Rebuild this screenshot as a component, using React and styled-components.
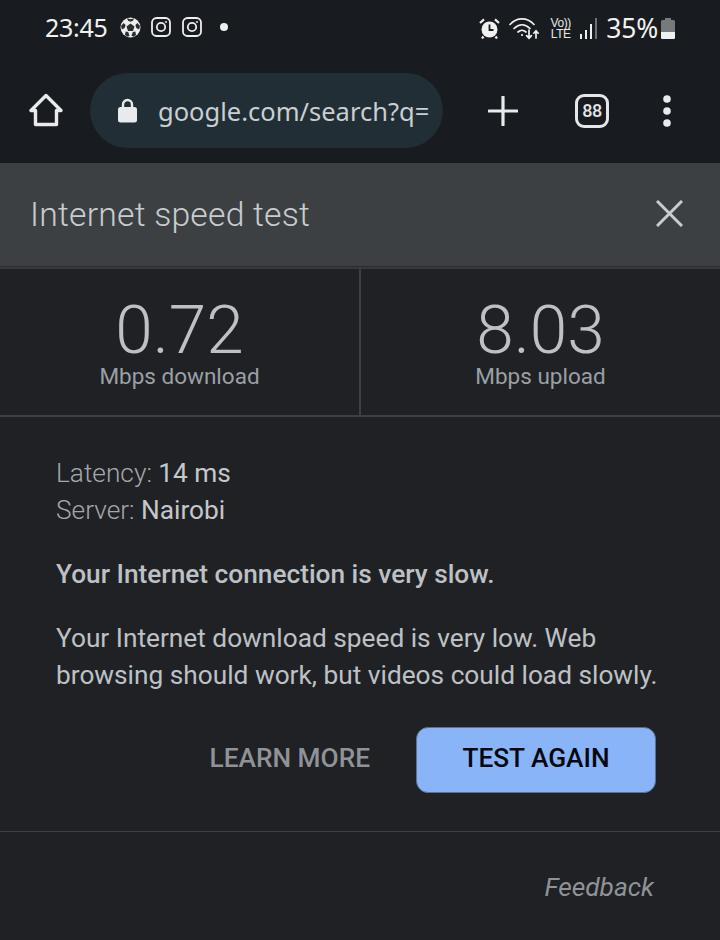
import React from "react";
import styled, { createGlobalStyle } from "styled-components";

const Global = createGlobalStyle`
  html, body {
    margin: 0;
    padding: 0;
    background: #202124;
  }
  * { box-sizing: border-box; }
`;

const Page = styled.div`
  width: 720px;
  height: 940px;
  overflow: hidden;
  background: #202124;
  font-family: Roboto, sans-serif;
  display: flex;
  flex-direction: column;
`;

const StatusBar = styled.div`
  height: 58px;
  background: #181b1f;
  color: #f1f1f1;
  padding: 0 45px 3px 45px;
  display: flex;
  align-items: center;
  justify-content: space-between;
  font-family: "Noto Sans", sans-serif;
`;

const StatusGroup = styled.div`
  display: flex;
  align-items: center;
  gap: ${(p) => p.$gap || 0}px;
  padding-top: ${(p) => p.$top || 0}px;
`;

const StatusSlot = styled.div`
  display: flex;
  align-items: center;
  margin-left: ${(p) => p.$left || 0}px;
`;

const Clock = styled.span`
  font-size: 25px;
  letter-spacing: -0.3px;
  margin-right: 2px;
`;

const Percent = styled.span`
  font-size: 26.5px;
  letter-spacing: -0.2px;
  margin-left: 8px;
`;

const Volte = styled.span`
  font-family: "Liberation Sans", sans-serif;
  font-size: 12px;
  line-height: 11px;
  letter-spacing: -0.4px;
  text-align: center;
  color: #e8e8e8;
  width: 21px;
  margin: 1px 0 0 10px;
  white-space: nowrap;
`;

const Toolbar = styled.div`
  height: 105px;
  background: #181b1f;
  padding: 0 0 0 29px;
  display: flex;
  align-items: center;
`;

const UrlPill = styled.div`
  width: 353px;
  height: 75px;
  margin-left: 27px;
  margin-top: 1px;
  border-radius: 38px;
  background: #222e35;
  padding: 0 10px 0 28px;
  display: flex;
  align-items: center;
  gap: 21px;
  overflow: hidden;
`;

const UrlText = styled.span`
  font-family: "Noto Sans", sans-serif;
  font-size: 25.5px;
  color: #c9cfd2;
  white-space: nowrap;
`;

const ToolIcon = styled.div`
  display: flex;
  align-items: center;
  justify-content: center;
  margin-left: ${(p) => p.$left}px;
  margin-top: 1px;
`;

const TabCount = styled.div`
  width: 34px;
  height: 34px;
  border: 3px solid #e4e6e8;
  border-radius: 9px;
  margin-left: 57px;
  margin-top: 1px;
  display: flex;
  align-items: center;
  justify-content: center;
  font-size: 18px;
  font-weight: 500;
  letter-spacing: -0.5px;
  color: #e4e6e8;
`;

const Header = styled.div`
  height: 105px;
  background: #3c4043;
  border-bottom: 1px solid #2b2d30;
  padding: 0 37px 3px 30px;
  display: flex;
  align-items: center;
  justify-content: space-between;
`;

const Title = styled.h1`
  margin: 2px 0 0;
  font-size: 33.75px;
  letter-spacing: 0.2px;
  font-weight: 300;
  color: #c9cccf;
`;

const Stats = styled.div`
  height: 150px;
  display: grid;
  grid-template-columns: 361px 1fr;
  border-top: 2px solid #37393c;
  border-bottom: 2px solid #3c4043;
`;

const Stat = styled.div`
  display: flex;
  flex-direction: column;
  align-items: center;
  padding-top: 28px;
  border-right: ${(p) => (p.$divider ? "2px solid #3c4043" : "none")};
`;

const StatValue = styled.div`
  font-size: 67.5px;
  line-height: 66px;
  font-weight: 300;
  color: #bdc1c6;
`;

const StatLabel = styled.div`
  font-size: 22.5px;
  line-height: 26px;
  color: #9aa0a6;
`;

const Body = styled.div`
  padding: 38px 64px 0 56px;
  flex: 1;
`;

const Meta = styled.div`
  font-size: 26.25px;
  line-height: 37px;
  font-weight: 300;
  color: #a4a8ad;
`;

const MetaValue = styled.span`
  font-weight: 400;
  color: #c4c7cb;
`;

const Paragraph = styled.p`
  margin: ${(p) => p.$top}px 0 0;
  font-size: 26.25px;
  line-height: 37px;
  font-weight: ${(p) => (p.$strong ? 500 : 400)};
  color: #bdc1c6;
  white-space: nowrap;
`;

const Actions = styled.div`
  margin-top: 33px;
  display: flex;
  align-items: center;
  justify-content: flex-end;
  gap: 46px;
`;

const LinkButton = styled.button`
  border: 0;
  background: none;
  padding: 0 0 5px;
  font-family: Roboto, sans-serif;
  font-size: 26.25px;
  font-weight: 500;
  color: #8f9398;
`;

const PrimaryButton = styled.button`
  width: 240px;
  height: 66px;
  border: 1px solid #5f6f8c;
  border-radius: 12px;
  background: #8ab4f8;
  padding: 0 0 5px;
  font-family: Roboto, sans-serif;
  font-size: 26.25px;
  font-weight: 500;
  color: #05070d;
`;

const Footer = styled.div`
  margin-top: 38px;
  height: 109px;
  border-top: 1px solid #3c4043;
  padding: 40px 66px 0 0;
  text-align: right;
  font-size: 26.25px;
  font-style: italic;
  color: #8f9398;
`;

const SoccerIcon = () => (
  <svg width="21" height="21" viewBox="0 0 21 21">
    <circle cx="10.5" cy="10.5" r="10" fill="#eeeeee" />
    <path d="M10.5 6.5l4 2.9-1.5 4.6H8l-1.5-4.6z" fill="#2b2d30" />
    <path d="M7 1.2l3.5 1 3.5-1-1 2.6-2.5 1-2.5-1zM1 9l2.6-3 2 2-.9 3-2.8 1.6zM20 9l-2.6-3-2 2 .9 3 2.8 1.6zM5 18l.6-3.5 2.6.6 1.3 3.6-2 1zM16 18l-.6-3.5-2.6.6-1.3 3.6 2 1z" fill="#2b2d30" />
  </svg>
);

const InstagramIcon = () => (
  <svg width="20" height="20" viewBox="0 0 20 20" fill="none" stroke="#eeeeee" strokeWidth="1.8">
    <rect x="1" y="1" width="18" height="18" rx="4.5" />
    <circle cx="10" cy="10" r="4.2" />
    <circle cx="15" cy="5" r="0.6" fill="#eeeeee" strokeWidth="1" />
  </svg>
);

const Dot = () => (
  <svg width="8" height="8" viewBox="0 0 8 8" style={{ marginLeft: 8 }}>
    <circle cx="4" cy="4" r="4" fill="#eeeeee" />
  </svg>
);

const AlarmIcon = () => (
  <svg width="21" height="21" viewBox="0 0 21 21">
    <circle cx="10.5" cy="11.5" r="8" fill="#f0f0f0" />
    <path d="M10.500 6.500v5.500h4" fill="none" stroke="#181b1f" strokeWidth="1.800" />
    <path d="M1 5l4-3.600M20 5l-4-3.600M4.500 18.500L3 20.500M16.500 18.500L18 20.500" stroke="#f0f0f0" strokeWidth="2.200" />
  </svg>
);

const WifiIcon = () => (
  <svg width="31" height="23" viewBox="0 0 31 23" fill="none" stroke="#f0f0f0" strokeWidth="1.700" strokeLinecap="round">
    <path d="M1 7.500c7-7.500 17-7.500 24 0" />
    <path d="M5 11.500c5-5 11-5 16 0" />
    <path d="M9 15c3-2.600 5-2.600 8 0" />
    <circle cx="13" cy="18" r="1.100" fill="#f0f0f0" stroke="none" />
    <path d="M20 13v8M17.600 18.600l2.400 2.600 2.400-2.600M27 21v-7M24.800 16.200l2.200-2.400 2.200 2.400" />
  </svg>
);

const SignalIcon = () => (
  <svg width="19" height="21" viewBox="0 0 19 21">
    <rect x="1" y="16" width="2" height="5" fill="#eeeeee" />
    <rect x="6" y="12" width="2" height="9" fill="#eeeeee" />
    <rect x="11" y="6" width="2" height="15" fill="#eeeeee" />
    <rect x="16" y="0" width="2" height="21" fill="#6e7174" />
  </svg>
);

const BatteryIcon = () => (
  <svg width="14" height="21" viewBox="0 0 14 21">
    <path d="M4 0h6v2h2.500a1.500 1.500 0 0 1 1.500 1.500V19.500a1.500 1.500 0 0 1-1.500 1.500h-11A1.500 1.500 0 0 1 0 19.500V3.500A1.500 1.500 0 0 1 1.500 2H4z" fill="#77797c" />
    <path d="M0 14h14v5.500a1.500 1.500 0 0 1-1.500 1.500h-11A1.500 1.500 0 0 1 0 19.500z" fill="#f0f0f0" />
  </svg>
);

const HomeIcon = () => (
  <svg width="34" height="34" viewBox="0 0 34 34" fill="none" stroke="#e8eaed" strokeWidth="3.400" strokeLinejoin="round">
    <path d="M17 2.500L2 17.500h4.500V31.500h21V17.500H32z" />
  </svg>
);

const LockIcon = () => (
  <svg width="19" height="25" viewBox="0 0 19 25">
    <path d="M5 10V6.500a4.500 4.500 0 0 1 9 0V10" fill="none" stroke="#e8eaed" strokeWidth="2.400" />
    <rect x="0" y="9" width="19" height="15.500" rx="2.500" fill="#e8eaed" />
  </svg>
);

const PlusIcon = () => (
  <svg width="30" height="30" viewBox="0 0 30 30" stroke="#e8eaed" strokeWidth="3.200" strokeLinecap="round">
    <path d="M15 1v28M1 15h28" />
  </svg>
);

const MenuIcon = () => (
  <svg width="8" height="32" viewBox="0 0 8 32" fill="#e8eaed">
    <circle cx="4" cy="4" r="3.800" />
    <circle cx="4" cy="16" r="3.800" />
    <circle cx="4" cy="28" r="3.800" />
  </svg>
);

const CloseIcon = () => (
  <svg width="27" height="27" viewBox="0 0 27 27" stroke="#c9cccf" strokeWidth="3">
    <path d="M1 1l25 25M26 1L1 26" />
  </svg>
);

export default function App() {
  return (
    <Page>
      <Global />
      <StatusBar>
        <StatusGroup $gap={10.5}>
          <Clock>23:45</Clock>
          <SoccerIcon />
          <InstagramIcon />
          <InstagramIcon />
          <Dot />
        </StatusGroup>
        <StatusGroup $top={2}>
          <AlarmIcon />
          <StatusSlot $left={9}>
            <WifiIcon />
          </StatusSlot>
          <Volte>
            Vo))
            <br />
            LTE
          </Volte>
          <StatusSlot $left={8}>
            <SignalIcon />
          </StatusSlot>
          <Percent>35%</Percent>
          <StatusSlot $left={3}>
            <BatteryIcon />
          </StatusSlot>
        </StatusGroup>
      </StatusBar>
      <Toolbar>
        <HomeIcon />
        <UrlPill>
          <LockIcon />
          <UrlText>google.com/search?q=</UrlText>
        </UrlPill>
        <ToolIcon $left={45}>
          <PlusIcon />
        </ToolIcon>
        <TabCount>88</TabCount>
        <ToolIcon $left={54}>
          <MenuIcon />
        </ToolIcon>
      </Toolbar>
      <Header>
        <Title>Internet speed test</Title>
        <CloseIcon />
      </Header>
      <Stats>
        <Stat $divider>
          <StatValue>0.72</StatValue>
          <StatLabel>Mbps download</StatLabel>
        </Stat>
        <Stat>
          <StatValue>8.03</StatValue>
          <StatLabel>Mbps upload</StatLabel>
        </Stat>
      </Stats>
      <Body>
        <Meta>
          Latency: <MetaValue>14 ms</MetaValue>
          <br />
          Server: <MetaValue>Nairobi</MetaValue>
        </Meta>
        <Paragraph $strong $top={27}>
          Your Internet connection is very slow.
        </Paragraph>
        <Paragraph $top={27}>
          Your Internet download speed is very low. Web
          <br />
          browsing should work, but videos could load slowly.
        </Paragraph>
        <Actions>
          <LinkButton>LEARN MORE</LinkButton>
          <PrimaryButton>TEST AGAIN</PrimaryButton>
        </Actions>
      </Body>
      <Footer>Feedback</Footer>
    </Page>
  );
}
